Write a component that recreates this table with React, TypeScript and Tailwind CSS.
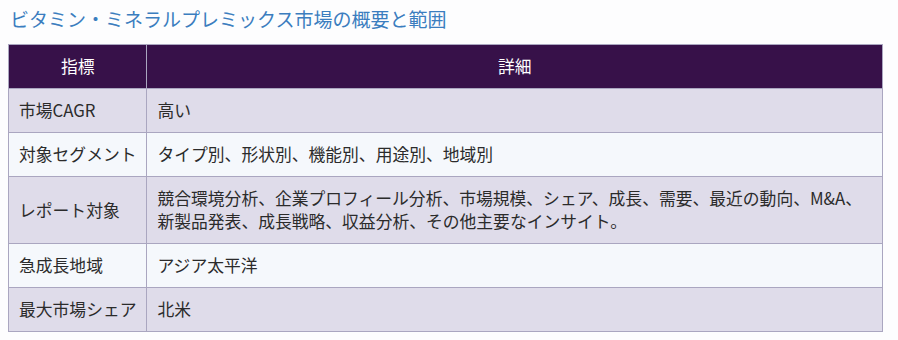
import React from 'react';

const rows: [string, string][] = [
  ['市場CAGR', '高い'],
  ['対象セグメント', 'タイプ別、形状別、機能別、用途別、地域別'],
  [
    'レポート対象',
    '競合環境分析、企業プロフィール分析、市場規模、シェア、成長、需要、最近の動向、M&A、新製品発表、成長戦略、収益分析、その他主要なインサイト。',
  ],
  ['急成長地域', 'アジア太平洋'],
  ['最大市場シェア', '北米'],
];

const App: React.FC = () => {
  return (
    <div
      className="min-h-[340px] w-[898px] bg-[#fdfdfe] px-[8px] pt-[4px] text-[#2b2b2b]"
      style={{ fontFamily: '"Noto Sans CJK JP", "Noto Sans", sans-serif' }}
    >
      <h2 className="pl-[2px] text-[19px] leading-[30px] text-[#3b7dbf]">
        ビタミン・ミネラルプレミックス市場の概要と範囲
      </h2>
      <table className="mt-[10px] w-[875px] border-collapse border border-[#aaa6c0] text-[16.8px] leading-[23px]">
        <thead>
          <tr className="bg-[#371149] text-white">
            <th className="w-[136px] border border-[#aaa6c0] px-[10px] py-[10px] text-center font-normal">
              指標
            </th>
            <th className="border border-[#aaa6c0] px-[10px] py-[10px] text-center font-normal">
              詳細
            </th>
          </tr>
        </thead>
        <tbody>
          {rows.map(([k, v], i) => (
            <tr key={k} className={i % 2 === 0 ? 'bg-[#dfdcea]' : 'bg-[#f5f8fc]'}>
              <td className="border border-[#aaa6c0] px-[10px] py-[10px] whitespace-nowrap">{k}</td>
              <td className="border border-[#aaa6c0] py-[10px] pl-[10px] pr-[10px]">{v}</td>
            </tr>
          ))}
        </tbody>
      </table>
    </div>
  );
};

export default App;
